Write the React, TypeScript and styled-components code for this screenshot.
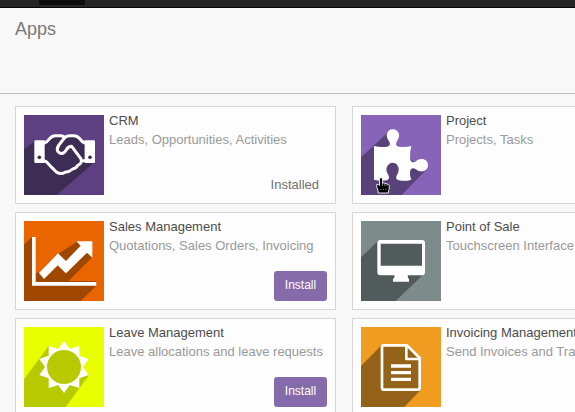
import React from "react";
import styled, { createGlobalStyle } from "styled-components";

const GlobalStyle = createGlobalStyle`
  * { box-sizing: border-box; }
  body {
    margin: 0;
    overflow: hidden;
    background: #f8f8f8;
    font-family: "Liberation Sans", Arial, sans-serif;
    font-size: 13px;
    color: #4c4c4c;
  }
`;

const Screen = styled.div`
  width: 100%;
  height: 412px;
  overflow: hidden;
`;

const TopBar = styled.nav`
  height: 8px;
  padding-left: 39px;
  background: #262626;
  border-bottom: 1px solid #080808;
`;

const ActiveTab = styled.div`
  width: 46px;
  height: 5px;
  background: #0c0c0c;
`;

const Header = styled.header`
  height: 86px;
  padding: 10px 15px 0;
  border-bottom: 1px solid #bdbdbd;
`;

const Title = styled.h1`
  margin: 0;
  font-size: 18px;
  line-height: 22px;
  font-weight: 400;
  color: #777;
`;

const Grid = styled.main`
  display: grid;
  grid-template-columns: repeat(2, 321px);
  grid-auto-rows: 98px;
  gap: 8px 16px;
  padding: 12px 0 0 15px;
`;

const Card = styled.article`
  display: flex;
  gap: 5px;
  padding: 8px;
  border: 1px solid #d6d6d6;
  background: #fdfdfd;
`;

const Tile = styled.svg`
  display: block;
  flex: none;
  width: 80px;
  height: 80px;
`;

const IconSlot = styled.div`
  position: relative;
  flex: none;
  width: 80px;
  height: 80px;
`;

const Details = styled.div`
  display: flex;
  flex: 1;
  flex-direction: column;
  min-width: 0;
  height: 80px;
  white-space: nowrap;
`;

const Name = styled.h2`
  margin: -4px 0 0;
  font-size: 13px;
  line-height: 19px;
  font-weight: 400;
  color: #4c4c4c;
`;

const Summary = styled.p`
  margin: 0;
  line-height: 19px;
  color: #999;
`;

const Installed = styled.span`
  align-self: flex-end;
  margin: auto 8px 0 0;
  line-height: 20px;
  color: #6f6f6f;
`;

const InstallButton = styled.button`
  align-self: flex-end;
  width: 53px;
  height: 30px;
  margin: auto 0 0;
  padding: 0 0 3px;
  border: 0;
  border-radius: 3px;
  background: #866baa;
  color: #fff;
  font: 12px "Liberation Sans", Arial, sans-serif;
`;

const Pointer = styled.svg`
  position: absolute;
  left: 15px;
  top: 62px;
  width: 14px;
  height: 17px;
`;

const CrmIcon = () => (
  <Tile viewBox="0 0 240 240">
    <path fill="#5e4082" d="M0 0h240v240H0z" />
    <path fill="#3d2d55" d="M0 103 34 78l28 10 22-20 34-3 34 0 30 22v55h29L98 240H0z" />
    <path fill="#fff" d="M34 76h28v68H34q-3 0-3-3V79q0-3 3-3zM182 76h28q3 0 3 3v62q0 3-3 3h-28z" />
    <circle cx="46" cy="127" r="5.5" fill="#3d2d55" />
    <circle cx="198" cy="127" r="5.5" fill="#3d2d55" />
    <g fill="none" stroke="#fff" strokeWidth="9" strokeLinejoin="round" strokeLinecap="round">
      <path d="M61 84Q69 81 75 73 83 62 94 62H108Q115 62 120 65" />
      <path d="M183 84Q174 81 169 73 161 62 149 62H136Q127 62 121 69L104 91Q97 102 102 110 108 118 118 114 123 111 127 104 133 94 143 94L170 130Q174 137 171 143 168 149 161 151 158 160 146 162 136 171 123 172 111 180 97 171L84 158 70 143Q66 138 61 138" />
      <path d="M173 137h10" />
    </g>
  </Tile>
);

const ProjectIcon = () => (
  <Tile viewBox="0 0 240 240">
    <path fill="#8764b8" d="M0 0h240v240H0z" />
    <path fill="#594179" d="M0 127 82 51l50 70 62 45L122 240H0z" />
    <path fill="#fff" d="M39 93q20 5 39 2c12-3 10-11 4-19-10-15-3-33 13-33 17 0 25 18 15 32-6 9-7 17 4 20q19 3 37-2-5 20-4 37c2 15 11 14 20 7 15-10 34-3 34 13 0 17-19 25-33 15-10-7-18-8-21 5q-1 12 4 24-19 6-37 2c-12-3-9-12-4-20 8-15 0-33-15-33s-24 18-15 33c5 8 7 17-4 20q-19 2-37-2V93z" />
  </Tile>
);

const SalesIcon = () => (
  <Tile viewBox="0 0 240 240">
    <path fill="#ea6500" d="M0 0h240v240H0z" />
    <path fill="#9f4600" d="M0 71 23 49h10v131h184v14l-47 46H0z" />
    <path fill="#9f4600" d="M34 181V156l11-3 17 19 40-38 24 24 63-63 16 14-72 72zM102 98l57-35 14 13-45 49z" />
    <path fill="#ea6500" d="M35 48h120v14L102 99 35 158z" />
    <path fill="#9f4600" d="M35 158 47 154 60 174 48 183H35zM117 106l40-44 14 13-45 47z" />
    <path fill="#fff" d="M24 48h11v135h182v11H24zM45 156l57-59 24 23 44-46-13-13h48v49l-16-15-63 62-25-24-41 41z" />
  </Tile>
);

const PointOfSaleIcon = () => (
  <Tile viewBox="0 0 240 240">
    <path fill="#7d8b8b" d="M0 0h240v240H0z" />
    <path fill="#515b5b" d="M0 109 51 60h138v98l-85 82H0z" />
    <path fill="#fff" fillRule="evenodd" d="M58 57h125q9 0 9 9v87q0 10-9 10h-43q0 9 4 11v8H96v-8q5-2 5-11H58q-9 0-9-10V66q0-9 9-9zm1 11v66h124V68z" />
  </Tile>
);

const sunPoints = Array.from({ length: 20 }, (_, index) => {
  const radius = index % 2 === 0 ? 78 : 57;
  const angle = (index * Math.PI) / 10;
  return `${120 + Math.sin(angle) * radius},${120 - Math.cos(angle) * radius}`;
}).join(" ");

const LeaveIcon = () => (
  <Tile viewBox="0 0 240 240">
    <path fill="#e8ff00" d="M0 0h240v240H0z" />
    <path fill="#b7ca00" d="M0 157 73 58l121 88-69 94H0z" />
    <polygon fill="#fff" points={sunPoints} />
    <circle cx="120" cy="120" r="51" fill="#b7ca00" />
  </Tile>
);

const InvoiceIcon = () => (
  <Tile viewBox="0 0 240 240">
    <path fill="#f09c20" d="M0 0h240v240H0z" />
    <path fill="#946218" d="M0 117 62 54h76l38 38 3 97-49 51H0z" />
    <g fill="none" stroke="#fff" strokeWidth="8" strokeLinejoin="round">
      <path d="M68 55h70l38 38v89q0 6-6 6H69q-6 0-6-6V60q0-5 5-5z" />
      <path d="M136 57v39h39" />
      <path strokeWidth="10" d="M90 117h60M90 137h60M90 157h60" />
    </g>
  </Tile>
);

const HandPointer = () => (
  <Pointer viewBox="0 0 14 17">
    <path fill="#000" stroke="#e6e1eb" strokeWidth="1" d="M3.5 1.5q1.5-1.7 3 0V6q2-.6 2.3.5 1.7-.6 2.2.6 2-.2 2.2 1.3v4L12.5 13.5v2.5H2v-3L.7 10V7.5q1.7-.7 2.8 1z" />
    <path stroke="#ddd" strokeWidth=".6" d="M6.5 6v3M8.8 6.8V9M11 7.3V9M5 12v1M7.5 12v1M10 12v1" />
  </Pointer>
);

interface AppEntry {
  name: string;
  summary: string;
  Icon: React.ComponentType;
  status?: "installed" | "available";
  hovered?: boolean;
}

const apps: AppEntry[] = [
  { name: "CRM", summary: "Leads, Opportunities, Activities", Icon: CrmIcon, status: "installed" },
  { name: "Project", summary: "Projects, Tasks", Icon: ProjectIcon, hovered: true },
  { name: "Sales Management", summary: "Quotations, Sales Orders, Invoicing", Icon: SalesIcon, status: "available" },
  { name: "Point of Sale", summary: "Touchscreen Interface", Icon: PointOfSaleIcon },
  { name: "Leave Management", summary: "Leave allocations and leave requests", Icon: LeaveIcon, status: "available" },
  { name: "Invoicing Management", summary: "Send Invoices and Tra", Icon: InvoiceIcon },
];

export default function App() {
  return (
    <Screen>
      <GlobalStyle />
      <TopBar><ActiveTab /></TopBar>
      <Header><Title>Apps</Title></Header>
      <Grid>
        {apps.map(({ name, summary, Icon, status, hovered }) => (
          <Card key={name}>
            <IconSlot>
              <Icon />
              {hovered && <HandPointer />}
            </IconSlot>
            <Details>
              <Name>{name}</Name>
              <Summary>{summary}</Summary>
              {status === "installed" && <Installed>Installed</Installed>}
              {status === "available" && <InstallButton>Install</InstallButton>}
            </Details>
          </Card>
        ))}
      </Grid>
    </Screen>
  );
}
